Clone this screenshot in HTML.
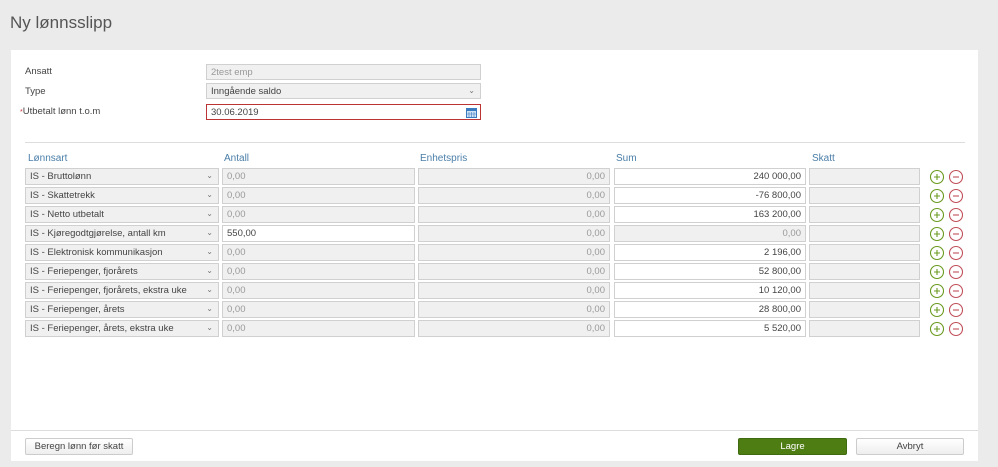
<!DOCTYPE html><html><head><style>
body{margin:0;width:998px;height:467px;background:#ebebeb;font-family:"Liberation Sans",sans-serif;font-size:10px;color:#444;position:relative;overflow:hidden}
.a{position:absolute;box-sizing:border-box}
h1{position:absolute;left:10px;top:13px;margin:0;font-weight:normal;font-size:17px;color:#555}
.in{position:absolute;box-sizing:border-box;border:1px solid #d0d0d0;background:#f0f0f0;height:17px;line-height:15px;padding:0 4px;font-size:9.5px;color:#999;white-space:nowrap;overflow:hidden}
.w{background:#fff;color:#444}
.r{text-align:right}
.lab{position:absolute;font-size:9.5px;color:#444}
.hd{position:absolute;top:153px;font-size:10px;color:#4a7ea8}
.chev{position:absolute;right:5px;top:-1px;font-size:8px;color:#777}
.ic{position:absolute}
.btn{position:absolute;box-sizing:border-box;height:17px;line-height:15px;text-align:center;font-size:9.5px;border:1px solid #ccc;background:linear-gradient(#fff,#eee);border-radius:2px;color:#444}
</style></head><body>
<h1>Ny lønnsslipp</h1>
<div class="a" style="left:11px;top:50px;width:967px;height:380px;background:#fff"></div>
<div class="a" style="left:11px;top:431px;width:967px;height:30px;background:#fff"></div>
<div class="lab" style="left:25px;top:66px">Ansatt</div>
<div class="lab" style="left:25px;top:86px">Type</div>
<div class="lab" style="left:20px;top:106px"><span style="color:#c33;font-size:7px">*</span>Utbetalt lønn t.o.m</div>
<div class="in" style="left:206px;top:64px;width:275px;height:16px">2test emp</div>
<div class="in" style="left:206px;top:83px;width:275px;height:16px;color:#444">Inngående saldo<span class="chev">&#8964;</span></div>
<div class="in w" style="left:206px;top:104px;width:275px;height:16px;border:1px solid #b33">30.06.2019<svg style="position:absolute;right:3px;top:2px" width="11" height="11"><rect x="0.5" y="1.5" width="10" height="9" fill="#cfe3f5" stroke="#3a7bbf"/><rect x="0.5" y="1.5" width="10" height="2.5" fill="#3a7bbf"/><path d="M3 5v5M5.5 5v5M8 5v5M1 7h9" stroke="#3a7bbf" stroke-width=".6"/></svg></div>
<div class="a" style="left:25px;top:142px;width:940px;height:1px;background:#ddd"></div>
<div class="hd" style="left:28px">Lønnsart</div>
<div class="hd" style="left:224px">Antall</div>
<div class="hd" style="left:420px">Enhetspris</div>
<div class="hd" style="left:616px">Sum</div>
<div class="hd" style="left:812px">Skatt</div>
<div id="rows"></div>
<div class="a" style="left:11px;top:430px;width:967px;height:1px;background:#ddd"></div>
<div class="btn" style="left:25px;top:438px;width:108px">Beregn lønn før skatt</div>
<div class="btn" style="left:738px;top:438px;width:109px;background:#4e7d14;border-color:#3f6a0f;color:#fff">Lagre</div>
<div class="btn" style="left:856px;top:438px;width:108px">Avbryt</div>
<script>
var d=[["IS - Bruttolønn","0,00","240 000,00"],["IS - Skattetrekk","0,00","-76 800,00"],["IS - Netto utbetalt","0,00","163 200,00"],["IS - Kjøregodtgjørelse, antall km","550,00","0,00",1],["IS - Elektronisk kommunikasjon","0,00","2 196,00"],["IS - Feriepenger, fjorårets","0,00","52 800,00"],["IS - Feriepenger, fjorårets, ekstra uke","0,00","10 120,00"],["IS - Feriepenger, årets","0,00","28 800,00"],["IS - Feriepenger, årets, ekstra uke","0,00","5 520,00"]];
var h="";d.forEach(function(r,i){var y=168+i*19;
h+='<div class="in" style="left:25px;top:'+y+'px;width:194px;color:#444">'+r[0]+'<span class="chev">&#8964;</span></div>';
h+='<div class="in'+(r[3]?' w':'')+'" style="left:222px;top:'+y+'px;width:193px">'+r[1]+'</div>';
h+='<div class="in r" style="left:418px;top:'+y+'px;width:192px">0,00</div>';
h+='<div class="in r'+(r[3]?'':' w')+'" style="left:614px;top:'+y+'px;width:192px">'+r[2]+'</div>';
h+='<div class="in" style="left:809px;top:'+y+'px;width:111px"></div>';
h+='<svg class="ic" style="left:929px;top:'+(y+1)+'px" width="36" height="16"><circle cx="8" cy="8" r="6.5" fill="none" stroke="#6a9a1f" stroke-width="1.1"/><path d="M8 5v6M5 8h6" stroke="#6a9a1f" stroke-width="1.1"/><circle cx="27" cy="8" r="6.5" fill="none" stroke="#c0505a" stroke-width="1.1"/><path d="M24 8h6" stroke="#c0505a" stroke-width="1.1"/></svg>';});
document.getElementById("rows").innerHTML=h;
</script>
</body></html>
